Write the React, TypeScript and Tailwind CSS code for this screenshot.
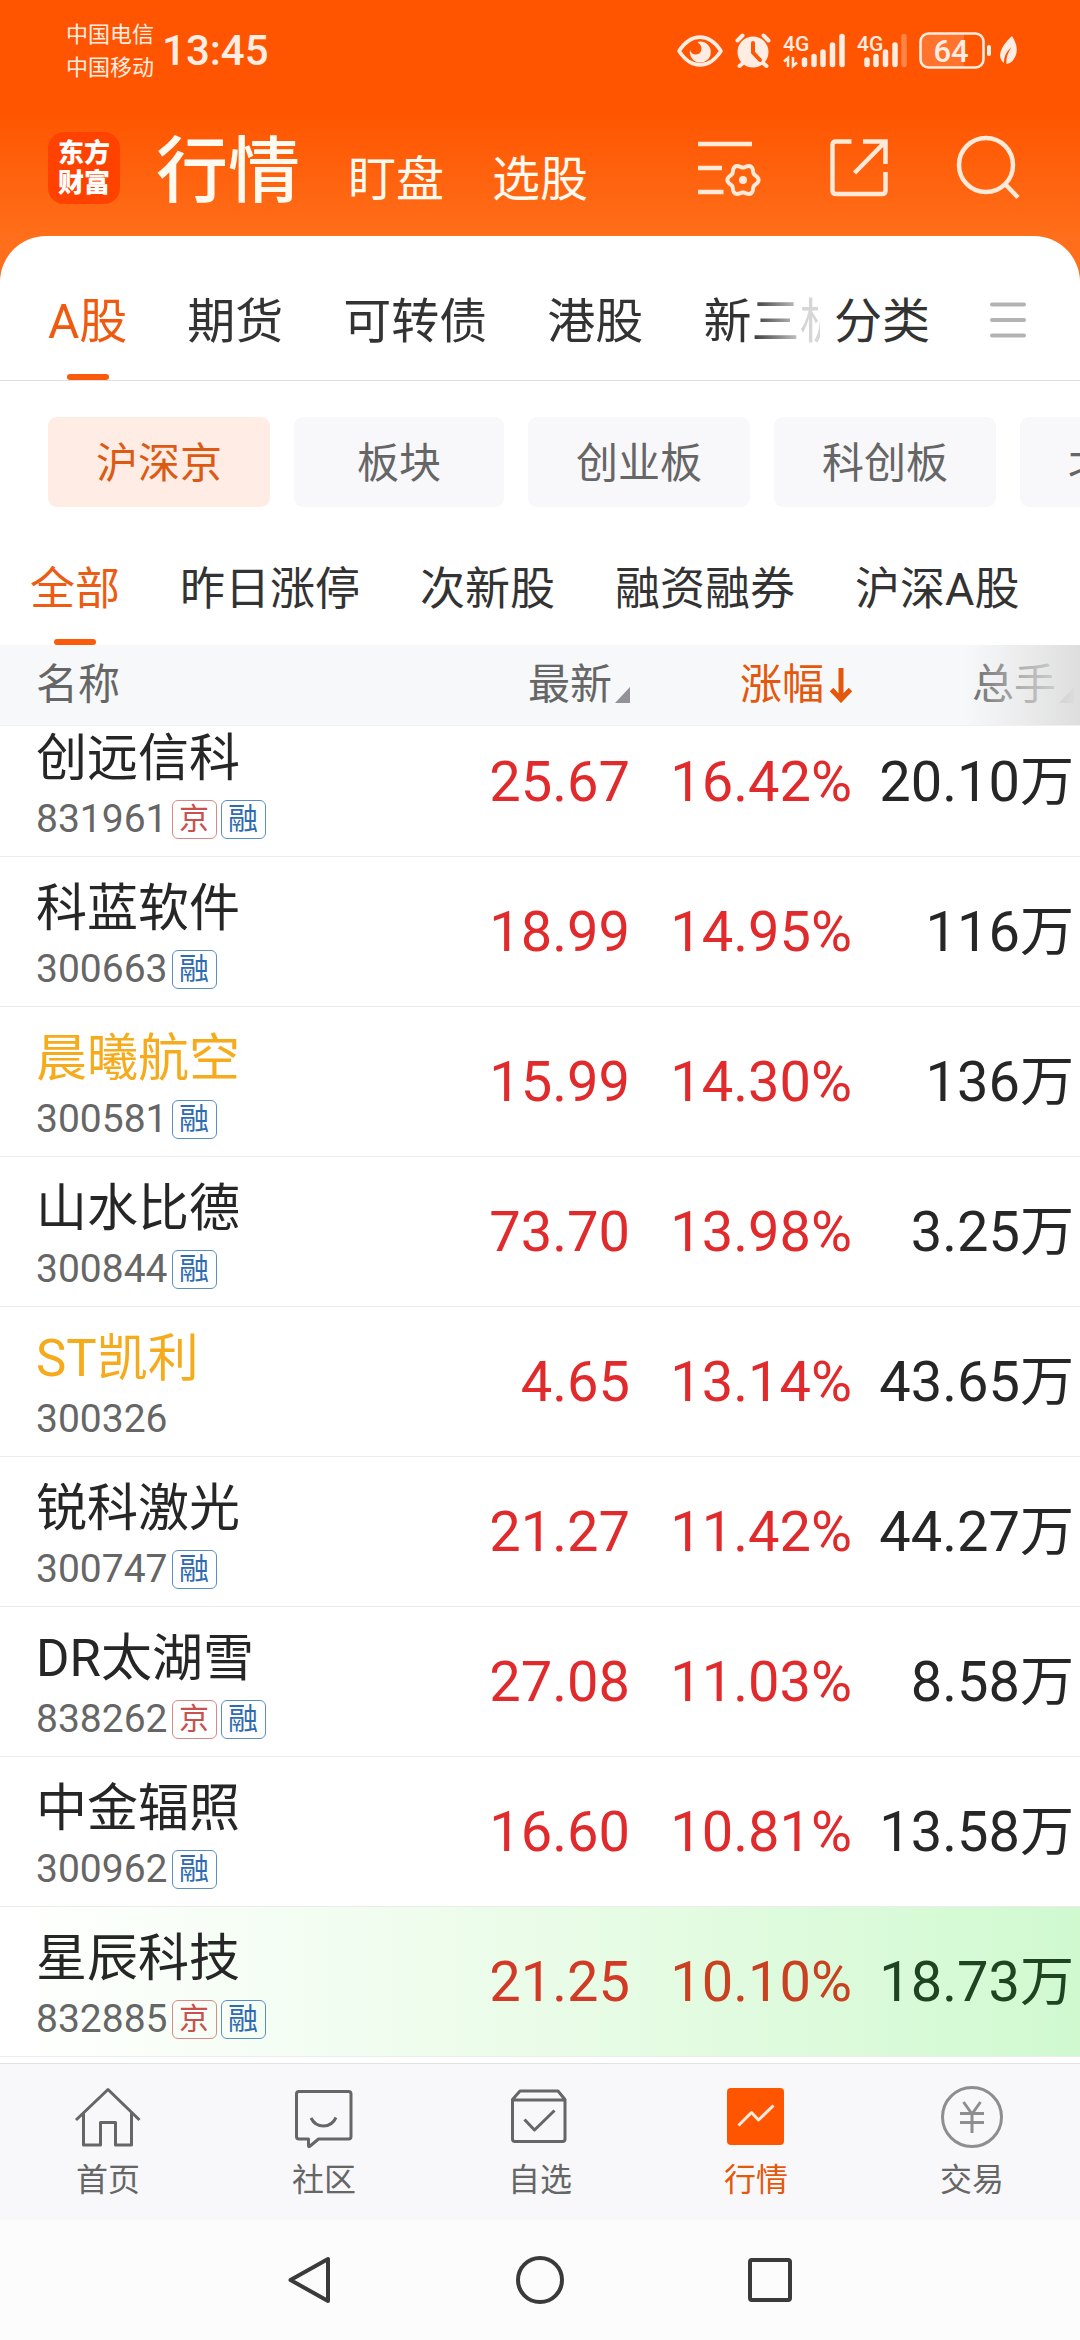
import { ReactNode } from "react";
import clsx from "clsx";

const marketTabs = ["A股", "期货", "可转债", "港股", "新三板"];
const boards = ["沪深京", "板块", "创业板", "科创板", "北交所"];
const filters = ["全部", "昨日涨停", "次新股", "融资融券", "沪深A股"];

type Stock = {
  name: string;
  code: string;
  tags: string[];
  price: string;
  change: string;
  volume: string;
  watched?: boolean;
  falling?: boolean;
};

const stocks: Stock[] = [
  { name: "创远信科", code: "831961", tags: ["京", "融"], price: "25.67", change: "16.42%", volume: "20.10" },
  { name: "科蓝软件", code: "300663", tags: ["融"], price: "18.99", change: "14.95%", volume: "116" },
  { name: "晨曦航空", code: "300581", tags: ["融"], price: "15.99", change: "14.30%", volume: "136", watched: true },
  { name: "山水比德", code: "300844", tags: ["融"], price: "73.70", change: "13.98%", volume: "3.25" },
  { name: "ST凯利", code: "300326", tags: [], price: "4.65", change: "13.14%", volume: "43.65", watched: true },
  { name: "锐科激光", code: "300747", tags: ["融"], price: "21.27", change: "11.42%", volume: "44.27" },
  { name: "DR太湖雪", code: "838262", tags: ["京", "融"], price: "27.08", change: "11.03%", volume: "8.58" },
  { name: "中金辐照", code: "300962", tags: ["融"], price: "16.60", change: "10.81%", volume: "13.58" },
  { name: "星辰科技", code: "832885", tags: ["京", "融"], price: "21.25", change: "10.10%", volume: "18.73", falling: true },
];

// six-lobed gear outline around (744, 180)
const gearPoints = Array.from({ length: 72 }, (_, i) => {
  const a = (i * Math.PI) / 36;
  const r = 14 + 1.6 * Math.cos(6 * a);
  return `${(744 + r * Math.cos(a)).toFixed(2)},${(180 + r * Math.sin(a)).toFixed(2)}`;
}).join(" ");

let StatusBar = () => {
  return (
    <div className="flex items-center justify-between pt-[18px] pl-[66px] pr-[62px] text-[#ffece2]">
      <div className="flex items-center gap-2">
        <div className="text-[22px] leading-[33px]">
          <p>中国电信</p>
          <p>中国移动</p>
        </div>
        <p className="text-[42px] leading-[52px] font-medium">13:45</p>
      </div>
      <svg className="w-[342px] h-[40px]" viewBox="676 31 342 40" fill="currentColor">
        <path
          d="M679 51C691 32.500 709 32.500 721 51C709 69.500 691 69.500 679 51Z"
          fill="none"
          stroke="currentColor"
          strokeWidth="3.600"
          strokeLinejoin="round"
        />
        <path d="M700 41.500A10.500 10.500 0 1 1 690 50Q691.500 54.500 696 54.500Q701 54 701.500 49Q701.500 44.500 697.500 42.500Q698.500 41.500 700 41.500Z" />
        <circle cx="753" cy="52" r="15.500" />
        <path d="M737.500 40.500l5-5M768.500 40.500l-5-5M743 63l-3.500 3M763 63l3.500 3" stroke="currentColor" strokeWidth="4" strokeLinecap="round" />
        <path d="M753 43V52.500L760 60" fill="none" stroke="#ff5500" strokeWidth="4" strokeLinecap="round" />
        <text x="783" y="51" fontSize="21" fontWeight="500">4G</text>
        <path d="M784 61.500l4-3.500v9M793 57v9l4-3.500" fill="none" stroke="currentColor" strokeWidth="2.500" />
        <g stroke="currentColor" strokeWidth="5.500" strokeLinecap="round">
          <path d="M804.500 60V64.500M814 56.500V64.500M823 52V64.500M832.500 45V64.500M842 36.500V64.500" />
          <path d="M867 60V64.500M876 56.500V64.500M885.500 52V64.500M895 45V64.500" />
          <path d="M904 36.500V64.500" opacity="0.300" />
        </g>
        <text x="857" y="51" fontSize="21" fontWeight="500">4G</text>
        <path d="M928 34H964V67H928Q921 67 921 60V41Q921 34 928 34Z" opacity="0.200" />
        <rect x="920.500" y="33.500" width="63" height="34" rx="8" fill="none" stroke="currentColor" strokeWidth="2.600" />
        <rect x="987" y="45" width="4" height="11" rx="2" />
        <text x="951" y="62" fontSize="31" fontWeight="500" textAnchor="middle">64</text>
        <path d="M1012 36Q1018 45 1016.500 53Q1014 63 1006.500 64Q1005.500 56 1011.500 47Q1003.500 54 1004 63Q998.500 59 1000.500 52Q1003 44 1012 36Z" />
      </svg>
    </div>
  );
};

let Header = () => {
  return (
    <header className="bg-[linear-gradient(to_bottom,#ff5500_110px,#ff6e1a_236px)] pb-12">
      <StatusBar />
      <div className="mt-7 mb-3 flex h-28 items-center justify-between pl-12 pr-14">
        <div className="flex items-center">
          <div className="flex size-[72px] flex-col items-center justify-center rounded-2xl bg-[#ff4200] text-[26px] leading-[30px] font-black text-white">
            <span>东方</span>
            <span>财富</span>
          </div>
          <nav className="ml-9 flex items-baseline gap-12 pt-4 text-[48px] leading-[104px] text-[#fffaf0]">
            <a href="#quotes" className="text-[72px] font-medium">行情</a>
            <a href="#watch">盯盘</a>
            <a href="#pick">选股</a>
          </nav>
        </div>
        <div className="flex items-center gap-[62px] text-[#ffe9d8]">
          <button aria-label="设置">
            <svg className="size-[68px]" viewBox="697 134 68 68" fill="none" stroke="currentColor" strokeWidth="4.500">
              <path d="M699 144H753M699 168H723M699 192H724.500" />
              <polygon points={gearPoints} strokeWidth="4" strokeLinejoin="round" />
              <circle cx="744" cy="180" r="4" fill="currentColor" stroke="none" />
            </svg>
          </button>
          <button aria-label="分享">
            <svg className="size-[68px]" viewBox="825 134 68 68" fill="none" stroke="currentColor" strokeWidth="4.500">
              <path d="M850.500 141.500H835Q831.500 141.500 831.500 145V190.500Q831.500 194 835 194H881Q884.500 194 884.500 190.500V172" />
              <path d="M862 141.500H884.500V164M853.500 173L884 142" />
            </svg>
          </button>
          <button aria-label="搜索">
            <svg className="size-[68px]" viewBox="957 134 68 68" fill="none" stroke="currentColor" strokeWidth="4.500">
              <circle cx="987" cy="165" r="27" />
              <path d="M1006 184L1019 197.500" />
            </svg>
          </button>
        </div>
      </div>
    </header>
  );
};

let Tag = ({ label }: { label: string }) => {
  return (
    <span
      className={clsx(
        "flex h-[39px] w-[45px] items-center justify-center rounded-md border text-[30px] leading-[36px]",
        label === "京" ? "border-[#d98a86] text-[#c9504c]" : "border-[#5b8fc4] text-[#2f6bb0]"
      )}
    >
      {label}
    </span>
  );
};

let SortMark = () => {
  return (
    <svg className="mt-5 ml-0.5 h-4 w-4" viewBox="0 0 16 16">
      <path d="M16 0V16H1Z" fill="#929297" />
    </svg>
  );
};

let StockTable = () => {
  return (
    <table className="w-full table-fixed border-collapse">
      <thead className="bg-[#f7f8fa] text-[42px] leading-[80px] text-[#666]">
        <tr className="border-b border-[#eef0f3]">
          <th className="pl-9 text-left font-normal">名称</th>
          <th className="w-[220px] font-normal">
            <div className="flex items-center justify-end">
              最新
              <SortMark />
            </div>
          </th>
          <th className="w-[222px] font-normal text-[#e4580c]">
            <div className="flex items-center justify-end gap-1.5">
              涨幅
              <svg className="h-9 w-[22px]" viewBox="0 0 22 36" fill="none" stroke="currentColor" strokeWidth="5">
                <path d="M11 1V31M1.500 22.500L11 32.500L20.500 22.500" />
              </svg>
            </div>
          </th>
          <th className="relative w-[228px] font-normal">
            <div className="flex items-center justify-end pr-1.5">
              总手
              <SortMark />
            </div>
            <div className="absolute inset-y-0 right-0 w-[116px] bg-linear-to-r from-[#dedede]/0 via-[#e4e4e4]/60 to-[#dedede]"></div>
          </th>
        </tr>
      </thead>
      <tbody className="text-right text-[56px] leading-[60px]">
        {stocks.map((stock, i) => {
          // the first row is scrolled partly under the header
          const top = i === 0 ? "pt-[26px]" : "pt-[45px]";
          return (
            <tr
              key={stock.code}
              className={clsx(
                "border-b border-[#ececec] align-top",
                stock.falling && "bg-linear-to-r from-white via-[#eafce8] to-[#d0f9d0]"
              )}
            >
              <td className={clsx("pb-[9px] pl-9 text-left", i === 0 ? "pt-px" : "pt-5")}>
                <p
                  className={clsx(
                    "text-[51px] leading-[64px] whitespace-nowrap",
                    stock.watched ? "text-[#f5ab1c]" : "text-[#262626]"
                  )}
                >
                  {stock.name}
                </p>
                <div className="flex h-14 items-center gap-1">
                  <span className="text-[39px] leading-[56px] text-[#666]">{stock.code}</span>
                  {stock.tags.map((tag) => (
                    <Tag key={tag} label={tag} />
                  ))}
                </div>
              </td>
              <td className={clsx(top, stock.falling ? "text-[#d03a26]" : "text-[#e02a2c]")}>{stock.price}</td>
              <td className={clsx(top, stock.falling ? "text-[#c84222]" : "text-[#e02a2c]")}>{stock.change}</td>
              <td className={clsx(top, "pr-1.5 whitespace-nowrap", stock.falling ? "text-[#1f4422]" : "text-[#262626]")}>
                {stock.volume}
                <span className="text-[54px]">万</span>
              </td>
            </tr>
          );
        })}
      </tbody>
    </table>
  );
};

let NavItem = ({ label, viewBox, active, children }: { label: string; viewBox: string; active?: boolean; children: ReactNode }) => {
  return (
    <a
      href={"#" + label}
      className={clsx("flex flex-1 flex-col items-center gap-2 pt-5 pb-5", active ? "text-[#e4580c]" : "text-[#666]")}
    >
      <svg className="size-[68px]" viewBox={viewBox} fill="none" stroke="currentColor" strokeWidth="3" strokeLinejoin="round">
        {children}
      </svg>
      <span className="text-[32px] leading-[40px]">{label}</span>
    </a>
  );
};

let BottomNav = () => {
  return (
    <nav className="flex border-t border-[#e3e3e5] bg-[#f8f8fa]">
      <NavItem label="首页" viewBox="74 2084 68 68">
        <path d="M76 2120L108 2089.500L139.500 2120" />
        <path d="M83.500 2113V2145H100.500V2122.500H115.500V2145H131.500V2113" />
      </NavItem>
      <NavItem label="社区" viewBox="290 2084 68 68">
        <path d="M299 2091.500H348.500Q351 2091.500 351 2094V2136.500Q351 2139 348.500 2139H318.500L309.500 2146.500Q308.500 2147 308.500 2145.500V2139H299Q296.500 2139 296.500 2136.500V2094Q296.500 2091.500 299 2091.500Z" />
        <path d="M311 2118Q315 2126 323.500 2126Q332 2126 336 2117.500" />
      </NavItem>
      <NavItem label="自选" viewBox="506 2084 68 68">
        <path d="M512.500 2099.500L520 2091H558L565 2099.500V2139Q565 2141.500 562.500 2141.500H515Q512.500 2141.500 512.500 2139ZM512.500 2100H565" />
        <path d="M524.500 2119.500L534.500 2130L554.500 2110.500" />
      </NavItem>
      <NavItem label="行情" viewBox="722 2084 68 68" active>
        <rect x="727" y="2088" width="57" height="57" rx="4" fill="#ff5500" stroke="none" />
        <path d="M738.500 2125.500L751.500 2112.500L758.500 2120L773.500 2105.500" stroke="#ffece0" />
      </NavItem>
      <NavItem label="交易" viewBox="937 2084 68 68">
        <g stroke="#8e8e92">
          <circle cx="971" cy="2117" r="29.500" />
          <path d="M962.500 2102L971 2114L979.500 2102M971 2114V2133M959 2113.500H983M959 2122.500H983" />
        </g>
      </NavItem>
    </nav>
  );
};

let SystemNav = () => {
  return (
    <div className="flex h-[120px] items-center justify-center gap-[182px] bg-[#fcfcfc] text-[#3a3a3a]">
      <button aria-label="返回">
        <svg className="size-12" viewBox="0 0 48 48" fill="none" stroke="currentColor" strokeWidth="4" strokeLinejoin="round">
          <path d="M42 3V45L4.500 24Z" />
        </svg>
      </button>
      <button aria-label="主屏幕">
        <svg className="size-12" viewBox="0 0 48 48" fill="none" stroke="currentColor" strokeWidth="4">
          <circle cx="24" cy="24" r="22" />
        </svg>
      </button>
      <button aria-label="最近任务">
        <svg className="size-12" viewBox="0 0 48 48" fill="none" stroke="currentColor" strokeWidth="4">
          <rect x="4" y="4" width="40" height="40" rx="2" />
        </svg>
      </button>
    </div>
  );
};

export default function App() {
  return (
    <div className="flex min-h-screen flex-col overflow-hidden bg-white font-[Roboto,'Noto_Sans_CJK_SC',sans-serif]">
      <Header />

      <main className="relative -mt-12 flex-1 rounded-t-[46px] bg-white">
        <div className="flex h-[145px] border-b border-[#dedede] pl-12 text-[48px] leading-[172px] text-[#333]">
          <div className="flex min-w-0 flex-1 gap-[60px] overflow-hidden whitespace-nowrap [mask-image:linear-gradient(to_right,#000_91%,#0003_98%)]">
            {marketTabs.map((tab, i) => (
              <button key={tab} className={clsx("relative h-full shrink-0", i === 0 && "text-[#f05a10]")}>
                {tab}
                {i === 0 && <span className="absolute bottom-0 left-1/2 h-1.5 w-[42px] -translate-x-1/2 rounded-full bg-[#fa5a0c]"></span>}
              </button>
            ))}
          </div>
          <button className="h-full shrink-0 pl-[14px]">分类</button>
          <button aria-label="更多" className="ml-[60px] mr-[54px] flex shrink-0 items-center pt-6">
            <svg className="h-9 w-9" viewBox="0 0 36 36" stroke="#b3b3b3" strokeWidth="4" strokeLinecap="round">
              <path d="M2 2.500H34M2 18H34M2 33.500H34" />
            </svg>
          </button>
        </div>

        <div className="flex gap-6 overflow-hidden pt-9 pl-12 text-[42px] leading-[86px] text-[#666]">
          {boards.map((board, i) => (
            <button
              key={board}
              className={clsx(
                "min-w-[210px] shrink-0 rounded-[9px] px-12 pt-1",
                i === 0 ? "bg-[#ffede5] text-[#dd5a14]" : "bg-[#f8f8fa]"
              )}
            >
              {board}
            </button>
          ))}
        </div>

        <div className="flex gap-[60px] overflow-hidden pl-[30px] pt-7 text-[45px] leading-[110px] whitespace-nowrap text-[#333]">
          {filters.map((filter, i) => (
            <button key={filter} className={clsx("relative shrink-0", i === 0 && "text-[#ec5c12]")}>
              {filter}
              {i === 0 && <span className="absolute bottom-0 left-1/2 h-1.5 w-[42px] -translate-x-1/2 rounded-full bg-[#fa5a0c]"></span>}
            </button>
          ))}
        </div>

        <StockTable />
      </main>

      <BottomNav />
      <SystemNav />
    </div>
  );
}
